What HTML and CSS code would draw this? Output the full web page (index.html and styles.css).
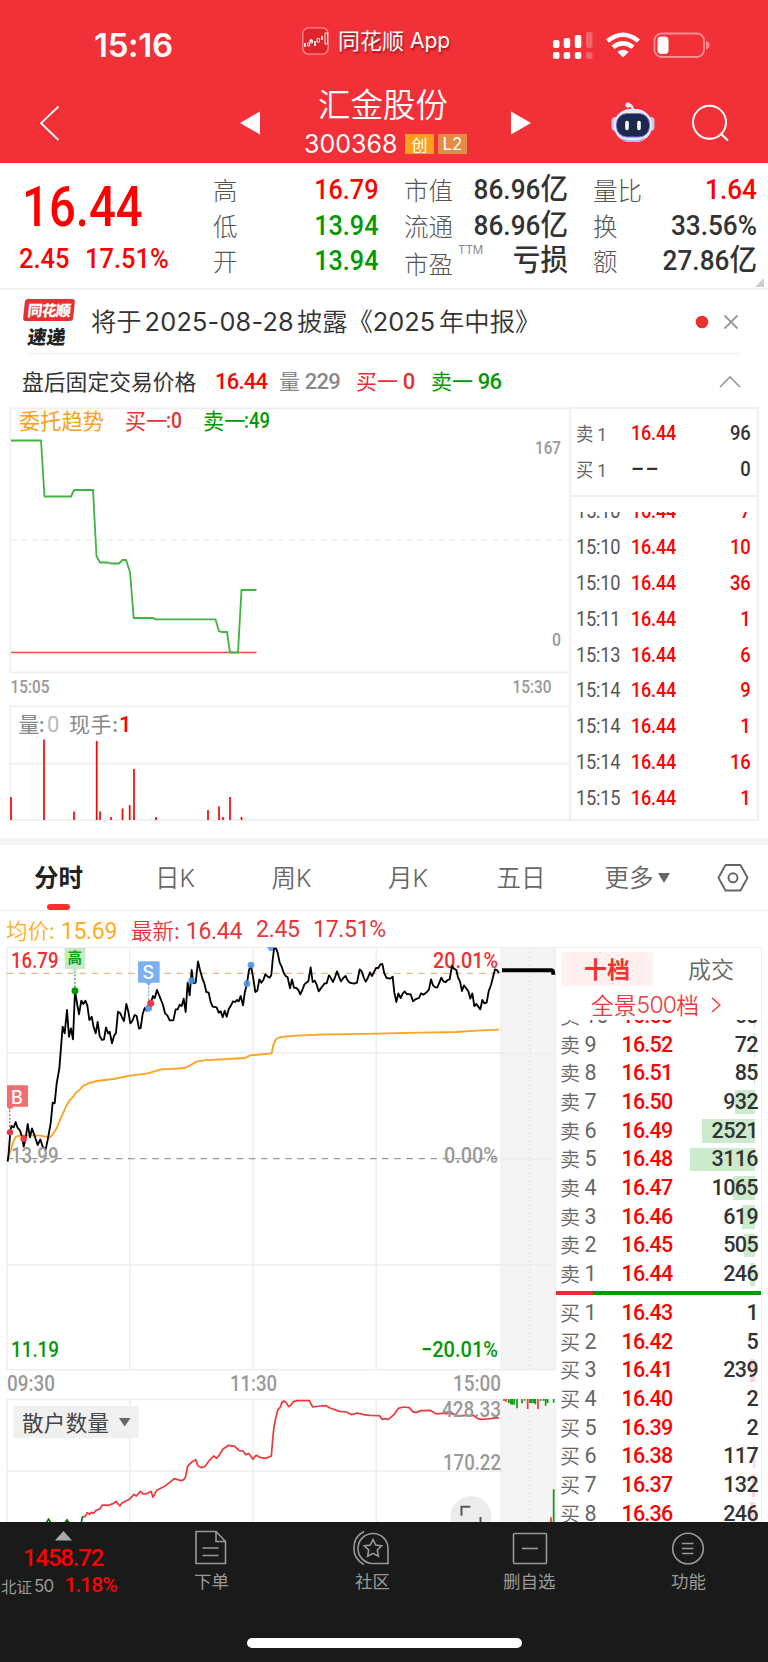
FILE: index.html
```html
<!DOCTYPE html>
<html lang="zh-CN">
<head>
<meta charset="utf-8">
<title>汇金股份 300368</title>
<link rel="stylesheet" href="styles.css">
</head>
<body>
<header class="top">
  <div class="status">
    <span class="clock">15:16</span>
    <div class="brand">
      <svg width="27" height="28" viewBox="0 0 27 28"><rect x=".8" y=".8" width="25.4" height="26.4" rx="6" fill="#e0242b" stroke="#ff8d8f" stroke-width="1.3"/><g stroke="#fff" stroke-width="1.6"><path d="M3 16v4M9 12v3M13 14v5M20 9v4"/></g><g fill="none" stroke="#fff" stroke-width=".9"><path d="M5.500 16h2v3h-2zM8 13h2.500v3H8zM15 11.500h2.500V15H15zM23 6h2.500v11H23z"/></g></svg>
      <span class="brand-cn">同花顺</span><span class="brand-en">App</span>
    </div>
    <svg class="sys" width="160" height="30" viewBox="552 30 160 30">
      <g fill="#fff"><rect x="553" y="40" width="6.500" height="8" rx="2"/><rect x="563.700" y="38" width="6.500" height="10" rx="2"/><rect x="574.800" y="35" width="6.500" height="13" rx="2"/><rect x="553" y="52" width="6.500" height="7" rx="2"/><rect x="563.700" y="52" width="6.500" height="7" rx="2"/><rect x="574.800" y="52" width="6.500" height="7" rx="2"/></g>
      <g fill="#fff" opacity=".25"><rect x="586" y="32" width="6.500" height="16" rx="2"/><rect x="586" y="52" width="6.500" height="7" rx="2"/></g>
      <g fill="none" stroke="#fff" stroke-width="4.600"><path d="M607.500 41Q623 28.500 638.500 41"/><path d="M613 47.300Q623 39.500 633 47.300"/></g>
      <path d="M617.500 52Q623 47.500 628.500 52L623 57.500Z" fill="#fff"/>
      <rect x="654.500" y="33.500" width="49.500" height="23.500" rx="7" fill="none" stroke="#ff8e91" stroke-width="1.800"/>
      <path d="M706 41q3.500 1 3.500 4.200t-3.500 4.300z" fill="#ff8e91"/><rect x="657.500" y="36.500" width="11" height="17.500" rx="4" fill="#fff"/>
    </svg>
  </div>
  <div class="nav">
    <svg class="back" width="22" height="36" viewBox="39 105 22 36"><path d="M58.500 106.500L41 123.200L58.500 140" fill="none" stroke="#fff" stroke-width="1.800"/></svg>
    <svg class="prev" width="20" height="24"><path d="M0 12L20 .5V23.500Z" fill="#fff"/></svg>
    <div class="title">
      <div class="name">汇金股份</div>
      <div class="code"><span>300368</span><i class="tag tag-a">创</i><i class="tag tag-b">L2</i></div>
    </div>
    <svg class="next" width="20" height="24"><path d="M20 12L0 .5V23.500Z" fill="#fff"/></svg>
    <svg class="robot" width="44" height="42" viewBox="611 101 44 42">
      <path d="M633 112q0-7-4-7" fill="none" stroke="#e9e9fb" stroke-width="2.500"/><circle cx="628" cy="105" r="2.600" fill="#eef"/>
      <rect x="611.500" y="117" width="8" height="14" rx="4" fill="#c9cbe6"/><rect x="646.500" y="117" width="8" height="14" rx="4" fill="#c9cbe6"/>
      <rect x="614" y="109" width="38" height="33" rx="16" fill="#e9eafa"/><path d="M619 137q14 7 28 0q-5 5-14 5t-14-5z" fill="#aab0ee"/>
      <rect x="616.500" y="113.500" width="33" height="23.500" rx="10.500" fill="#1c2a4c" stroke="#8468e4" stroke-width="1"/>
      <path d="M627 122.500v6M639 122.500v6" stroke="#fff" stroke-width="3.600" stroke-linecap="round"/>
    </svg>
    <svg class="search" width="40" height="40" viewBox="690 103 40 40"><circle cx="709.500" cy="122.300" r="16.500" fill="none" stroke="#fff" stroke-width="2"/><path d="M720.500 133.500L728 140.500" stroke="#fff" stroke-width="2.200"/></svg>
  </div>
</header>

<section class="quote">
  <div class="last">
    <div class="price"><b>16.44</b></div>
    <div class="chg"><b>2.45</b><b>17.51%</b></div>
  </div>
  <dl class="facts f1"><dt>高</dt><dd class="up">16.79</dd><dt>低</dt><dd class="dn">13.94</dd><dt>开</dt><dd class="dn">13.94</dd></dl>
  <dl class="facts f2"><dt>市值</dt><dd>86.96<u>亿</u></dd><dt>流通</dt><dd>86.96<u>亿</u></dd><dt class="low">市盈<sup>TTM</sup></dt><dd><u>亏损</u></dd></dl>
  <dl class="facts f3"><dt>量比</dt><dd class="up">1.64</dd><dt>换</dt><dd>33.56%</dd><dt>额</dt><dd>27.86<u>亿</u></dd></dl>
  <svg class="corner" width="9" height="9"><path d="M9 0V9H0Z" fill="#ccc"/></svg>
</section>

<section class="news">
  <div class="logo"><div class="logo-a"><span>同花顺</span></div><div class="logo-b">速递</div></div>
  <p>将于<span class="d1">2025-08-28</span>披露《<span class="d2">2025</span>年中报》</p>
  <svg width="28" height="18" viewBox="697 312 28 18"><circle cx="704" cy="321" r="6.300" fill="#e93030"/></svg>
  <svg width="16" height="16"><path d="M1.500 1.500L14.500 14.500M14.500 1.500L1.500 14.500" stroke="#999" stroke-width="1.800"/></svg>
</section>

<section class="after">
  <span class="lbl">盘后固定交易价格</span><b class="up">16.44</b><span class="vol">量 <b>229</b></span><span class="bid">买一 <b>0</b></span><span class="ask">卖一 <b>96</b></span>
  <svg width="22" height="13"><path d="M1 12L11 2L21 12" fill="none" stroke="#999" stroke-width="1.600"/></svg>
</section>

<section class="box">
  <svg class="trend" width="560" height="414" viewBox="9 407 560 414">
    <g fill="none" stroke="#f0f0f0" stroke-width="1.800"><path d="M9 408.300H569M10.300 408V672.300H569M10.300 821V706.500H569M10 763.500H569M10 820.200H569"/><path d="M11 540H569" stroke-dasharray="5.300 5.400"/></g>
    <path d="M11 652.500H256.500" stroke="#f5484a" stroke-width="1.500"/>
    <polyline fill="none" stroke="#40b340" stroke-width="1.800" points="11,440.500 41,440.500 44.500,496.500 71,496.500 74,490 93,490 96.500,556 100,562.500 107.500,562.500 111,563.500 119,563.500 122.500,560 126,560 130,572 133.700,618 153,618 155.500,619.300 215.500,619.300 219,631 222,632 227,632 230,652.500 238,652.500 241.500,590 256.500,590"/>
    <path stroke="#f00" stroke-width="1.700" d="M11 797V820M44 739.500V820M74 811.500V820M96.700 741V820M100 811.500V820M111 817V820M122.500 808.500V820M129.700 805V820M134 769V820M156 817V820M208 810V820M219 806.500V820M223 817V820M230 797V820M241.500 817V820"/>
    <g class="cn" font-size="21.200"><text x="19" y="428.700" fill="#f9a01b" textLength="85">委托趋势</text><text x="125" y="428.700" fill="#e93030">买一</text><text x="203" y="428.700" fill="#090">卖一</text></g>
    <g class="cn" font-size="21" fill="#888"><text x="18.500" y="731.500" textLength="26">量:</text><text x="69" y="731.500" textLength="49">现手:</text></g>
    <g class="nm" font-size="22"><text x="166" y="428" fill="#e93030" textLength="16" lengthAdjust="spacingAndGlyphs">:0</text><text x="244" y="428" fill="#090" textLength="26" lengthAdjust="spacingAndGlyphs">:49</text><text x="47" y="731.500" fill="#bbb" class="lite">0</text><text x="119" y="731.500" fill="#f00">1</text></g>
    <g class="nm ax" font-size="18.500"><text x="535" y="453.800" textLength="26" lengthAdjust="spacingAndGlyphs">167</text><text x="552" y="646" textLength="9" lengthAdjust="spacingAndGlyphs">0</text><text x="10.500" y="693" textLength="39" lengthAdjust="spacingAndGlyphs">15:05</text><text x="512.500" y="693" textLength="39" lengthAdjust="spacingAndGlyphs">15:30</text></g>
  </svg>
  <div class="ticks">
    <div class="pair">
      <div class="tick"><span class="cl">卖 1</span><b class="up">16.44</b><b>96</b></div>
      <div class="tick"><span class="cl">买 1</span><b class="dash">--</b><b>0</b></div>
    </div>
    <div class="deals">
      <div class="tick up"><span>15:10</span><b>16.44</b><b>7</b></div>
      <div class="tick up"><span>15:10</span><b>16.44</b><b>10</b></div>
      <div class="tick up"><span>15:10</span><b>16.44</b><b>36</b></div>
      <div class="tick up"><span>15:11</span><b>16.44</b><b>1</b></div>
      <div class="tick up"><span>15:13</span><b>16.44</b><b>6</b></div>
      <div class="tick up"><span>15:14</span><b>16.44</b><b>9</b></div>
      <div class="tick up"><span>15:14</span><b>16.44</b><b>1</b></div>
      <div class="tick up"><span>15:14</span><b>16.44</b><b>16</b></div>
      <div class="tick up"><span>15:15</span><b>16.44</b><b>1</b></div>
    </div>
  </div>
</section>

<nav class="tabs">
  <span class="on">分时</span><span>日<em>K</em></span><span>周<em>K</em></span><span>月<em>K</em></span><span>五日</span><span class="more">更多<svg width="13" height="12"><path d="M0 1H12L6 11Z" fill="#666"/></svg></span>
  <svg width="32" height="30" viewBox="716 863 32 30"><path d="M724.500 865H739.500L746.500 877.800L739.500 890.500H724.500L717.500 877.800Z" fill="none" stroke="#666" stroke-width="1.900" stroke-linejoin="round"/><circle cx="732" cy="877.800" r="4.500" fill="none" stroke="#666" stroke-width="1.900"/></svg>
</nav>

<div class="info"><span class="avg">均价:<b>15.69</b></span><span>最新:<b>16.44</b></span><b>2.45</b><b class="pc">17.51%</b></div>

<section class="main">
  <svg class="minute" width="556" height="575" viewBox="0 947 556 575">
    <rect x="501.500" y="947" width="54" height="422.500" fill="#f4f4f4"/><rect x="501.500" y="1399" width="54" height="123" fill="#f4f4f4"/>
    <g fill="none" stroke="#eee" stroke-width="1.500"><path d="M7 947.600H556M7 1052.700H501M7 1264.700H501M7 1369.800H556M7 1399.400H501M7 1471.300H501M501 1159H556"/><path d="M7 947V1370M129.700 947V1370M253 947V1370M376.300 947V1370M501.300 947V1370M555.600 947V1370M7 1399V1522M129.700 1399V1522M253 1399V1522M376.300 1399V1522M501.300 1399V1522M555.600 1399V1522"/><path d="M529.500 948V1369M529.500 1400V1522M502 1053.500H555M502 1265H555" stroke-dasharray="2 2" stroke="#e8e8e8"/></g>
    <path d="M7 973.300H501" stroke="#e0b88e" stroke-width="1.200" stroke-dasharray="6.500 5.600"/>
    <path d="M7 1158.700H501" stroke="#999" stroke-width="1.300" stroke-dasharray="6.500 5.600"/>
    <g class="nm" font-size="22"><text x="11" y="967.500" fill="#ee3034" textLength="47.500" lengthAdjust="spacingAndGlyphs">16.79</text><text x="433" y="967.500" fill="#ee3034" textLength="65" lengthAdjust="spacingAndGlyphs">20.01%</text></g>
    <g transform="translate(0 940) scale(.33333)" fill="none" stroke-linejoin="round">
      <polyline stroke="#ffa21f" stroke-width="5.500" points="23,660 32,630 40,605 48,590 60,587 120,587 150,592 160,580 170,565 180,540 190,518 200,495 210,480 220,470 228,458 240,448 250,437 265,430 290,423 340,417 390,407 440,401 480,389 555,384 570,376 590,365 610,361 735,354 750,346 815,340 820,315 828,298 838,292 860,289 890,287 960,284 1130,281 1260,278 1370,276 1430,272 1497,269"/>
      <circle cx="814" cy="22" r="11" fill="#62a5f1"/>
      <polyline stroke="#000" stroke-width="5.500" points="23,665 26,640 31,575 34,558 41,562 47,546 52,562 60,572 66,590 71,620 77,595 83,552 90,592 96,565 103,585 113,615 121,598 128,620 137,628 143,600 152,550 158,488 164,490 170,430 178,385 184,310 188,260 194,280 201,210 207,290 213,265 219,298 225,152 232,195 237,223 244,182 250,192 256,182 262,196 268,240 275,230 281,262 287,280 293,246 299,288 306,300 312,298 318,262 324,280 329,275 336,310 342,288 348,278 354,215 361,220 367,234 372,243 379,192 385,215 391,250 397,243 404,225 410,228 417,266 422,264 428,222 434,204 440,212 446,204 452,190 459,168 464,175 471,150 479,170 489,195 495,220 502,226 509,241 520,241 527,208 533,208 539,194 545,198 551,176 557,216 563,128 569,166 575,90 580,130 587,128 594,64 600,90 607,115 613,130 619,156 626,158 632,186 638,200 650,202 656,218 662,214 668,232 674,212 680,230 686,208 693,196 699,184 705,186 711,180 716,184 722,168 729,196 734,160 741,130 747,90 753,78 759,110 766,156 772,152 778,118 784,128 790,120 796,103 803,110 809,113 814,105 818,60 822,27 828,25 833,38 839,68 845,80 851,98 857,108 863,112 870,145 876,118 882,143 889,144 895,150 901,163 907,150 913,134 919,128 925,124 932,82 938,126 944,122 950,134 956,154 962,146 968,138 974,130 980,130 987,106 993,115 999,126 1005,112 1011,94 1017,110 1023,124 1030,114 1037,108 1042,120 1049,128 1062,131 1071,128 1079,88 1085,94 1091,112 1097,125 1103,115 1110,97 1116,108 1122,96 1128,84 1135,84 1141,73 1147,72 1153,100 1160,114 1171,116 1178,110 1183,158 1189,186 1195,160 1202,174 1208,161 1214,154 1220,162 1232,163 1239,184 1246,178 1257,174 1263,160 1270,164 1281,156 1287,148 1293,118 1299,136 1306,142 1312,142 1318,128 1324,113 1330,124 1337,126 1343,120 1349,118 1356,78 1362,86 1369,90 1374,112 1380,124 1386,153 1392,136 1398,144 1405,154 1411,176 1417,160 1423,198 1429,192 1435,200 1441,208 1447,180 1453,190 1460,188 1466,154 1473,135 1479,112 1485,88 1491,90 1497,100"/>
      <path d="M1506 91H1655Q1660 91 1660 104" stroke="#000" stroke-width="12"/>
      <g stroke-width="4" stroke-dasharray="6 5"><path d="M225 92V145" stroke="#2faa3a"/><path d="M446 130V200" stroke="#7db3f2"/><path d="M29 500V570" stroke="#f15a5e"/></g>
      <g stroke="none"><circle cx="225" cy="152" r="10.500" fill="#090"/><circle cx="446" cy="204" r="10.500" fill="#5b9fee"/><circle cx="452" cy="190" r="10.500" fill="#e93a44"/><circle cx="30" cy="577" r="9.500" fill="#e93a44"/><circle cx="71" cy="596" r="10" fill="#e93a44"/><g fill="#4e95ea" opacity=".9"><circle cx="575" cy="122" r="10"/><circle cx="741" cy="131" r="10"/><circle cx="753" cy="75" r="10"/></g>
      <path d="M194 24h62v63h-22l-9 9l-9-9h-22z" fill="#c8e9c8"/><path d="M416 64h60q3 0 3 3v61h-24l-9 9l-9-9h-23V67q0-3 3-3z" fill="#7db0f1"/><path d="M21 436h60q3 0 3 3v61H42l-13 9l-8-9z" fill="#f16f71"/></g>
    </g>
    <text class="cn" x="67.500" y="962.500" font-size="14.500" font-weight="700" fill="#16a020">高</text>
    <g class="lt" font-size="18" fill="#fff"><text x="142.500" y="979">S</text><text x="11" y="1103.500">B</text></g>
    <g class="nm" font-size="22" fill="#999"><text x="11" y="1162.500" textLength="47.500" lengthAdjust="spacingAndGlyphs">13.99</text><text x="444" y="1162.500" textLength="54" lengthAdjust="spacingAndGlyphs">0.00%</text>
      <g fill="#090"><text x="11" y="1356.500" textLength="48" lengthAdjust="spacingAndGlyphs">11.19</text><text x="421" y="1356.500" textLength="77" lengthAdjust="spacingAndGlyphs">−20.01%</text></g>
      <text x="7" y="1391" textLength="48" lengthAdjust="spacingAndGlyphs">09:30</text><text x="230" y="1391" textLength="47" lengthAdjust="spacingAndGlyphs">11:30</text><text x="453" y="1391" textLength="48" lengthAdjust="spacingAndGlyphs">15:00</text></g>
    <rect x="13.500" y="1406" width="125.500" height="32.300" rx="3" fill="#f0f0f0"/>
    <text class="cn" x="22" y="1430.500" font-size="21.500" fill="#444" textLength="87">散户数量</text><path d="M119 1418H130.500L124.700 1426.500Z" fill="#666"/>
    <g transform="translate(0 1330) scale(.33333)" fill="none" stroke-linejoin="round" stroke-width="5.200">
      <polyline stroke="#ec3a3c" points="250,560 255,560 262,548 268,553 274,547 281,550 288,541 299,537 307,525 325,526 341,520 348,514 354,522 360,528 366,519 388,508 402,493 409,498 421,484 430,492 441,491 453,484 459,502 470,481 494,469 512,455 523,446 543,452 551,449 557,440 563,408 577,395 587,389 594,408 605,413 614,410 625,395 641,378 650,385 660,372 668,358 686,346 704,349 718,362 729,363 737,374 747,371 759,388 768,376 780,382 797,385 814,378 818,330 822,290 828,260 834,238 840,233 846,217 852,213 858,217 866,230 872,226 880,215 892,212 928,212 938,231 960,228 978,227 990,234 1018,244 1040,246 1055,254 1072,249 1090,254 1110,256 1138,257 1147,268 1155,266 1165,268 1182,254 1195,235 1210,231 1228,233 1238,245 1248,248 1262,242 1290,241 1310,252 1325,250 1355,250 1370,256 1422,257 1430,264 1442,268 1460,267 1475,266 1485,263 1497,264"/>
      <path stroke="#087a10" d="M139 578L146 567L152 578M195 578L201 569L207 578M244 578L247 562L250 559"/>
      <path stroke="#f33" d="M1512 207v6M1518 207v8M1583 207v30M1614 207v30M1653 562v16"/>
      <path stroke="#169a1b" d="M1526 207v12M1532 207v16M1537 207v17M1543 207v17M1551 207v28M1566 207v13M1574 207v5M1590 207v12M1595 207v13M1601 207v12M1606 207v16M1622 207v6M1631 207v5M1637 207v20M1643 207v12M1661 207v11M1661 478v100"/>
    </g>
    <g class="nm" font-size="22" fill="#999"><text x="442" y="1417" textLength="59" lengthAdjust="spacingAndGlyphs">428.33</text><text x="443" y="1470" textLength="58" lengthAdjust="spacingAndGlyphs">170.22</text></g>
    <circle cx="471" cy="1516.500" r="20.500" fill="#ececec"/><path d="M461.500 1515.700V1506.800H470.300M480.500 1517V1524" fill="none" stroke="#555" stroke-width="2"/>
  </svg>
  <div class="book">
    <div class="btabs"><span class="on">十档</span><span>成交</span></div>
    <div class="full">全景<i>500</i>档<svg width="10" height="16"><path d="M1 1L9 8L1 15" fill="none" stroke="#ec3a3c" stroke-width="1.500"/></svg></div>
    <div class="asks">
      <div class="lv"><span>卖<em>10</em></span><b>16.53</b><b><i style="width:1px"></i>68</b></div>
      <div class="lv"><span>卖<em>9</em></span><b>16.52</b><b><i style="width:1px"></i>72</b></div>
      <div class="lv"><span>卖<em>8</em></span><b>16.51</b><b><i style="width:1.500px"></i>85</b></div>
      <div class="lv"><span>卖<em>7</em></span><b>16.50</b><b><i style="width:20px"></i>932</b></div>
      <div class="lv"><span>卖<em>6</em></span><b>16.49</b><b><i style="width:53px"></i>2521</b></div>
      <div class="lv"><span>卖<em>5</em></span><b>16.48</b><b><i style="width:65px"></i>3116</b></div>
      <div class="lv"><span>卖<em>4</em></span><b>16.47</b><b><i style="width:22px"></i>1065</b></div>
      <div class="lv"><span>卖<em>3</em></span><b>16.46</b><b><i style="width:13px"></i>619</b></div>
      <div class="lv"><span>卖<em>2</em></span><b>16.45</b><b><i style="width:11px"></i>505</b></div>
      <div class="lv"><span>卖<em>1</em></span><b>16.44</b><b><i style="width:5px"></i>246</b></div>
    </div>
    <div class="ratio"><i></i></div>
    <div class="bids">
      <div class="lv"><span>买<em>1</em></span><b>16.43</b><b>1</b></div>
      <div class="lv"><span>买<em>2</em></span><b>16.42</b><b>5</b></div>
      <div class="lv"><span>买<em>3</em></span><b>16.41</b><b><i style="width:5px"></i>239</b></div>
      <div class="lv"><span>买<em>4</em></span><b>16.40</b><b>2</b></div>
      <div class="lv"><span>买<em>5</em></span><b>16.39</b><b>2</b></div>
      <div class="lv"><span>买<em>6</em></span><b>16.38</b><b><i style="width:2px"></i>117</b></div>
      <div class="lv"><span>买<em>7</em></span><b>16.37</b><b><i style="width:3px"></i>132</b></div>
      <div class="lv"><span>买<em>8</em></span><b>16.36</b><b><i style="width:5px"></i>246</b></div>
    </div>
  </div>
</section>

<footer class="bar">
  <div class="items">
    <div class="index"><svg width="17" height="10"><path d="M8.500 0L17 9.500H0Z" fill="#aaa"/></svg><b>1458.72</b><p>北证<em>50</em><b>1.18%</b></p></div>
    <div class="it it1"><svg width="34" height="36" viewBox="193 1530 34 36"><path d="M195 1531.500H215L224.500 1541.500V1563.500H195ZM215 1531.500V1541.500H224.500M201.500 1548H217.500M201.500 1555.500H217.500"/></svg>下单</div>
    <div class="it it2"><svg width="38" height="36" viewBox="352 1530 38 36"><path d="M373 1533.500A14.800 14.800 0 1 0 373 1563.500H388V1548.500A15 15 0 0 0 373 1533.500ZM364 1531.500A18.500 18.500 0 0 0 364 1564.500M373 1539.500L375.700 1545L381.700 1545.900L377.300 1550L378.400 1556.200L373 1553.300L367.600 1556.200L368.700 1550L364.300 1545.900L370.300 1545Z"/></svg><span>社区</span></div>
    <div class="it it3"><svg width="36" height="36" viewBox="512.500 1530 36 36"><rect x="514" y="1533.500" width="33" height="30" rx="1"/><path d="M522.500 1548.500H538.500"/></svg>删自选</div>
    <div class="it it4"><svg width="34" height="36" viewBox="671 1530 34 36"><circle cx="688" cy="1548.500" r="15.300"/><path d="M682 1543.500H693.500M682 1548.500H693.500M682 1553.500H693.500"/></svg>功能</div>
  </div>
  <div class="home"></div>
</footer>
</body>
</html>
```
FILE: styles.css
```css
* { box-sizing: border-box; margin: 0; padding: 0; }
body { width: 768px; height: 1662px; overflow: hidden; background: #fff; color: #333; font-family: "Noto Sans CJK SC", sans-serif; }
svg { display: block; flex: none; }
em, i { font-style: normal; }
u { text-decoration: none; }
b { font-family: Roboto, "Noto Sans CJK SC", sans-serif; font-weight: 500; }
.up { color: #f00; }
.dn { color: #090; }
.cn { font-family: "Noto Sans CJK SC", sans-serif; }
.nm { font-family: Roboto, sans-serif; font-weight: 500; }
.ax { fill: #999; }
.lite { font-weight: 400; }
.lt { font-family: Inter, sans-serif; font-weight: 500; }

.top { height: 163px; background: #f23038; color: #fff; }
.status { display: flex; height: 80px; padding: 27px 56px 0 94px; align-items: flex-start; }
.clock { width: 208px; height: 38px; font: 600 33px/37px Inter, sans-serif; letter-spacing: -.3px; }
.brand { display: flex; width: 250px; line-height: 27px; font-size: 22px; text-shadow: 1px 2px 2px rgba(60,0,0,.5); }
.brand-cn { margin-left: 9px; line-height: 25px; }
.brand-en { margin-left: 6px; font-family: Inter, sans-serif; font-size: 21px; }
.sys { margin-top: 3px; }
.nav { display: flex; height: 83px; padding: 5px 38px 0 39px; align-items: flex-start; }
.back { margin-top: 20px; }
.prev { margin: 26px 0 0 179px; }
.next { margin: 26px 0 0 0; }
.title { width: 251px; padding-left: 45px; }
.name { height: 42px; margin-left: 13px; font-weight: 350; font-size: 32.500px; line-height: 35px; }
.code { display: flex; align-items: center; height: 28px; font: 400 25px/28px Inter, sans-serif; margin-top: 3px; }
.code span { width: 101px; margin-left: -1px; }
.tag { width: 29px; height: 20px; margin-right: 4px; text-align: center; line-height: 20px; font-size: 17px; }
.tag-a { background: #fba01c; font-family: "Noto Sans CJK SC", sans-serif; font-size: 16px; }
.tag-b { background: #e58b47; }
.robot { margin: 16px 0 0 80px; }
.search { margin: 18px 0 0 35px; }

.quote { position: relative; display: flex; height: 127px; padding-top: 9px; border-bottom: 2px solid #f0f0f0; }
.last { width: 213px; color: #f00; }
.price { height: 68px; padding-left: 22px; font-size: 56px; line-height: 60px; }
.price b { display: inline-block; transform: scaleX(.845); transform-origin: left; }
.chg { display: flex; padding: 5px 0 0 19px; font-size: 28px; line-height: 28px; gap: 10px; }
.chg b { display: block; width: 56px; transform: scaleX(.91); transform-origin: left; }
.facts { display: grid; grid-template-columns: auto 1fr; grid-auto-rows: 35.500px; line-height: 35.500px; margin-right: 25px; }
.facts dt { font-size: 24.500px; font-weight: 300; color: #555; white-space: nowrap; }
.facts dd { font-family: Roboto, "Noto Sans CJK SC", sans-serif; font-weight: 500; font-size: 28px; text-align: right; transform: scaleX(.935); transform-origin: right; white-space: nowrap; }
.facts u { font-size: 29.500px; line-height: 30px; }
.f1 { width: 165px; margin-right: 26px; }
.f1 dd { transform: scaleX(.9); }
.f2 { width: 164px; }
.f3 { width: 164px; margin-right: 0; }
.facts .low { padding-top: 3px; }
.facts sup { position: absolute; margin: -8px 0 0 5px; font: 400 11.500px/24px Inter, sans-serif; color: #888; }
.corner { position: absolute; right: 4px; bottom: 1px; }

.news { display: flex; align-items: center; height: 64px; margin: 0 29px; border-bottom: 1.500px solid #eee; }
.logo { flex: none; width: 62px; margin-left: -6px; height: 46px; }
.logo-a { width: 50px; height: 22px; margin-left: 1px; border-radius: 3px; background: #e93030; transform: skewX(-6deg); color: #fff; font-size: 15px; font-weight: 900; line-height: 21px; text-align: center; }
.logo-a span { display: block; letter-spacing: -.8px; }
.logo-b { margin: 4px 0 0 5px; font-size: 19px; font-weight: 900; line-height: 21px; color: #222; transform: skewX(-8deg); }
.news p { flex: none; width: 610px; padding: 0 0 3px 6px; font-size: 25.300px; line-height: 38px; font-weight: 350; white-space: nowrap; }
.news p span { font: 400 25.300px/30px Inter, sans-serif; display: inline-block; }
.d1 { letter-spacing: .2px; margin: 0 3px; }
.d2 { margin: 0 4px 0 0; }

.after { display: flex; height: 53px; align-items: center; padding: 1px 0 0 22px; font-size: 21px; }
.lbl { width: 193px; font-size: 21.800px; }
.after b { font-size: 22px; letter-spacing: -.8px; }
.after > b { width: 64px; }
.vol { width: 77px; color: #888; }
.bid { width: 75px; color: #e93030; }
.ask { width: 288px; color: #090; }
.after span { line-height: 50px; white-space: nowrap; }

.box { display: flex; width: 750px; margin-left: 9px; height: 414px; }
.trend { overflow: visible; }
.ticks { width: 190.500px; border: 2px solid #f0f0f0; }
.pair { height: 88px; border-bottom: 2px solid #f0f0f0; padding-top: 7px; }
.deals { height: 307px; margin-top: 15px; overflow: hidden; }
.deals .tick:first-child { margin-top: -18px; }
.tick { display: grid; grid-template-columns: 54.500px 70px 1fr; height: 35.900px; line-height: 35px; padding: 0 7px 0 5px; font-size: 20px; font-family: Roboto, sans-serif; letter-spacing: -.2px; }
.tick span { color: #555; font-weight: 400; transform: scaleX(.91); transform-origin: left; }
.tick b { transform: scaleX(.9); transform-origin: left; }
.tick .cl { font-family: Roboto, "Noto Sans CJK SC", sans-serif; font-size: 19px; color: #666; padding-top: 1px; }
.tick b:last-child { text-align: right; transform: scaleX(.92); transform-origin: right; }
.tick .dash { font-size: 23px; letter-spacing: .7px; line-height: 34px; transform: scaleX(1.7); }

.tabs { display: flex; position: relative; height: 73px; margin-top: 17px; border-top: 7px solid #f4f4f4; border-bottom: 1.500px solid #eee; font-size: 24.500px; line-height: 64px; font-weight: 350; color: #666; padding-left: 34px; }
.tabs span { flex: none; width: 116.500px; white-space: nowrap; }
.tabs .on { width: 121px; font-weight: 700; color: #222; }
.tabs .on::after { content: ""; position: absolute; left: 47px; bottom: 0; width: 23px; height: 6px; border-radius: 3px; background: #f5332d; }
.tabs em { font-family: Inter, sans-serif; font-size: 24px; }
.tabs span:nth-child(5) { width: 108px; margin-left: -8px; }
.tabs .more { display: flex; width: 112px; gap: 4px; }
.more svg { margin-top: 27px; }
.tabs > svg { margin-top: 18px; }
.info { display: flex; height: 36px; padding-left: 6px; font-size: 21.500px; line-height: 37px; font-weight: 350; color: #e93338; }
.info b { font-weight: 400; font-size: 23px; letter-spacing: -.3px; }
.info span { width: 125px; white-space: nowrap; }
.info span b { margin-left: 6px; }
.info > b { width: 57px; }
.avg { color: #ffad1c; }

.main { display: flex; height: 575px; overflow: hidden; }
.book { width: 205.500px; border-top: 1.500px solid #eee; border-right: 1.500px solid #eee; }
.btabs { display: flex; padding: 4px 0 0 5px; line-height: 33px; font-size: 23px; color: #666; }
.btabs span { flex: none; width: 92px; height: 34px; text-align: center; font-weight: 350; }
.btabs .on { background: #fff1f0; border-radius: 4px; color: #f5332d; font-weight: 700; margin-right: 12px; }
.full { display: flex; align-items: center; height: 34px; padding: 3px 0 0 35px; font-size: 22.800px; line-height: 32px; font-weight: 350; color: #ec3a3c; }
.full i { font-family: Inter, sans-serif; letter-spacing: -.8px; font-size: 23px; }
.full svg { margin-left: 12px; }
.asks { height: 269px; overflow: hidden; }
.asks .lv:first-child { margin-top: -18.200px; }
.lv { display: grid; grid-template-columns: 61.500px 60px 1fr; height: 28.700px; line-height: 28.700px; padding: 0 2.500px 0 4px; }
.lv span { display: flex; font-size: 20px; color: #666; font-weight: 350; }
.lv em { margin-left: 4.500px; font: 400 21.500px/28.700px Roboto, sans-serif; }
.lv b { position: relative; color: #f00; font-size: 21.500px; letter-spacing: -.8px; }
.lv b:last-child { color: #333; text-align: right; letter-spacing: -.6px; }
.lv i { position: absolute; z-index: -1; right: 3px; top: 2.500px; height: 23.500px; background: #ccebcc; }
.bids .lv i { background: #ffd4d4; }
.ratio { height: 4px; margin-top: 2px; background: #090; }
.ratio i { display: block; width: 37px; height: 4px; background: #ee2b33; }
.bids { padding-top: 4px; }

.bar { height: 140px; background: #1a1a1a; color: #999; }
.items { display: flex; height: 116px; }
.index { width: 194px; padding-top: 9px; }
.index svg { margin-left: 55px; }
.index > b { display: block; margin-left: 23px; margin-top: 4px; font-size: 24.500px; line-height: 26px; letter-spacing: -1.100px; color: #f00; transform: scaleX(.97); transform-origin: left; }
.index p { display: flex; font-size: 15.500px; line-height: 25px; padding-left: 1px; margin-top: 3px; }
.index em { font: 400 17px/25px Inter, sans-serif; margin-left: 2px; letter-spacing: -.8px; }
.index p b { margin: -1px 0 0 11px; font-size: 21px; letter-spacing: -1px; color: #f00; }
.it { display: flex; flex-direction: column; padding-top: 8px; font-size: 17.500px; line-height: 27px; white-space: nowrap; }
.it svg { fill: none; stroke: #999; stroke-width: 1.600; margin-bottom: 1px; }
.it1 { width: 158px; }
.it2 { width: 151px; }
.it2 span { margin-left: 3px; }
.it3 { width: 168px; }
.it3 svg { margin-left: 9px; }
.home { width: 275px; height: 10px; margin-left: 247px; border-radius: 5px; background: #fff; }
```
